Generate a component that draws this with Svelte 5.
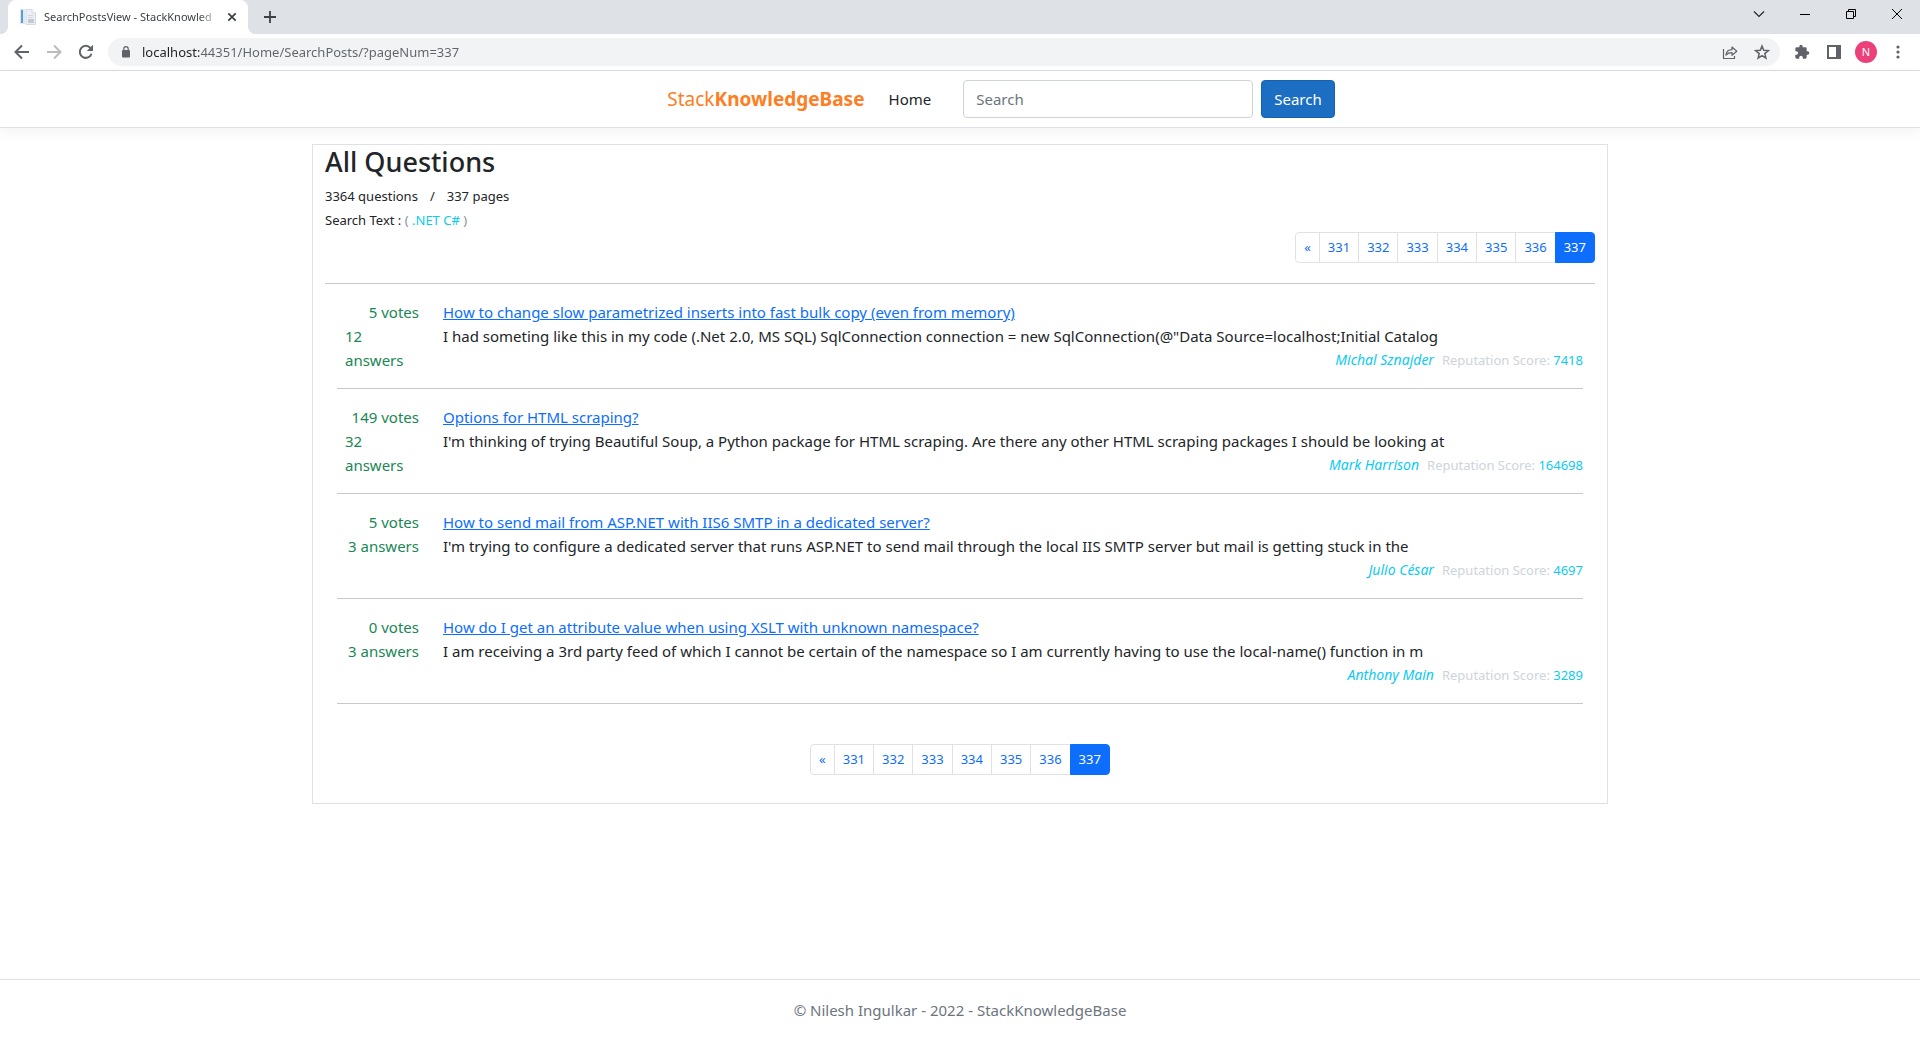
<script>
  const pages = ['«', '331', '332', '333', '334', '335', '336', '337'];
  const current = '337';
  let query = $state('');
  let address = $state('localhost:44351/Home/SearchPosts/?pageNum=337');

  const questions = [
    {
      votes: 5,
      answers: 12,
      title: 'How to change slow parametrized inserts into fast bulk copy (even from memory)',
      body: 'I had someting like this in my code (.Net 2.0, MS SQL) SqlConnection connection = new SqlConnection(@"Data Source=localhost;Initial Catalog',
      author: 'Michal Sznajder',
      score: 7418
    },
    {
      votes: 149,
      answers: 32,
      title: 'Options for HTML scraping?',
      body: "I'm thinking of trying Beautiful Soup, a Python package for HTML scraping. Are there any other HTML scraping packages I should be looking at",
      author: 'Mark Harrison',
      score: 164698
    },
    {
      votes: 5,
      answers: 3,
      title: 'How to send mail from ASP.NET with IIS6 SMTP in a dedicated server?',
      body: "I'm trying to configure a dedicated server that runs ASP.NET to send mail through the local IIS SMTP server but mail is getting stuck in the",
      author: 'Julio César',
      score: 4697
    },
    {
      votes: 0,
      answers: 3,
      title: 'How do I get an attribute value when using XSLT with unknown namespace?',
      body: 'I am receiving a 3rd party feed of which I cannot be certain of the namespace so I am currently having to use the local-name() function in m',
      author: 'Anthony Main',
      score: 3289
    }
  ];
</script>

{#snippet pager(label)}
  <nav aria-label={label}>
    <ul class="pagination">
      {#each pages as p}
        <li><a href="#page" class:active={p === current} aria-current={p === current ? 'page' : undefined}>{p}</a></li>
      {/each}
    </ul>
  </nav>
{/snippet}

<div class="window">
  <div class="tabstrip">
    <div class="tab">
      <svg class="favicon" width="16" height="16" viewBox="0 0 16 16" aria-hidden="true">
        <rect x="0" y="0" width="5" height="15" fill="#dce9f3" />
        <rect x="1" y="1" width="2" height="13" fill="#5a9fd0" />
        <path d="M6 .5h6l3.500 3.500V15.500H6z" fill="#eceff3" stroke="#d5dae0" stroke-width="1" />
        <path d="M12 .5V4h3.500" fill="#fff" stroke="#d5dae0" stroke-width="1" />
        <path d="M8 6.500h5M8 8.500h5" stroke="#d3d9df" />
        <rect x="8" y="10" width="6" height="4" fill="#c3cad3" />
      </svg>
      <span class="tab-title">SearchPostsView - StackKnowled</span>
      <button class="tab-close" aria-label="Close tab">
        <svg width="10" height="10" viewBox="0 0 10 10"><path d="M1.300 1.300l7.400 7.400M8.700 1.300L1.300 8.700" stroke="#3c4043" stroke-width="1.700" /></svg>
      </button>
    </div>
    <button class="new-tab" aria-label="New tab">
      <svg width="12" height="12" viewBox="0 0 12 12"><path d="M6 0v12M0 6h12" stroke="#3c4043" stroke-width="1.800" /></svg>
    </button>
    <div class="window-buttons">
      <button aria-label="Search tabs"><svg width="12" height="12" viewBox="0 0 12 12"><path d="M1 3.500l5 5 5-5" fill="none" stroke="#202124" stroke-width="1.100" /></svg></button>
      <button aria-label="Minimize"><svg width="10" height="10" viewBox="0 0 10 10"><path d="M0 5.500h10" stroke="#000" /></svg></button>
      <button aria-label="Restore"><svg width="10" height="10" viewBox="0 0 10 10" fill="none" stroke="#000"><path d="M.5 2.500h7v7h-7zM2.500 2.500v-2h7v7h-2" /></svg></button>
      <button aria-label="Close"><svg width="10" height="10" viewBox="0 0 10 10"><path d="M0 0l10 10M10 0L0 10" stroke="#000" /></svg></button>
    </div>
  </div>

  <div class="toolbar">
    <button class="tool" aria-label="Back"><svg width="16" height="16" viewBox="0 0 16 16" fill="none" stroke="#5f6368" stroke-width="2"><path d="M15 8H2.500M8 1.500L1.500 8 8 14.500" /></svg></button>
    <button class="tool" aria-label="Forward"><svg width="16" height="16" viewBox="0 0 16 16" fill="none" stroke="#babcbe" stroke-width="2"><path d="M1 8h12.500M8 1.500L14.500 8 8 14.500" /></svg></button>
    <button class="tool" aria-label="Reload"><svg width="16" height="16" viewBox="0 0 16 16"><path d="M13.500 9.700A6 6 0 1 1 12.400 4" fill="none" stroke="#5f6368" stroke-width="2" /><path d="M15 .8V7H8.800z" fill="#5f6368" /></svg></button>
    <div class="omnibox">
      <svg width="10" height="12" viewBox="0 0 10 12" aria-hidden="true"><rect x="1" y="4" width="8" height="7.500" rx="1" fill="#5f6368" /><path d="M2.800 5V2.800a2.200 2.200 0 0 1 4.400 0V5" fill="none" stroke="#5f6368" stroke-width="1.200" /></svg>
      <input class="address" aria-label="Address" bind:value={address} />
      <button class="tool" aria-label="Share"><svg width="16" height="16" viewBox="0 0 16 16" fill="none" stroke="#5f6368" stroke-width="1.200"><path d="M1.500 5v9.500h11V12" /><path d="M4 11c.3-3.500 2.200-5.300 6-5.400V3l4.800 4.200L10 11.300V8.700C7.300 8.700 5.500 9.400 4 11z" stroke-linejoin="round" /></svg></button>
      <button class="tool" aria-label="Bookmark"><svg width="16" height="16" viewBox="0 0 16 16" fill="none" stroke="#5f6368" stroke-width="1.500"><path d="M8 2l1.700 4.200 4.600.4-3.500 3 1.100 4.500L8 11.700l-3.900 2.400 1.100-4.500-3.500-3 4.600-.4z" /></svg></button>
    </div>
    <button class="tool" aria-label="Extensions"><svg width="16" height="16" viewBox="0 0 24 24"><path fill="#5f6368" d="M20.500 11H19V7a2 2 0 0 0-2-2h-4V3.500a2.500 2.500 0 0 0-5 0V5H4a2 2 0 0 0-2 2v3.800h1.500a2.700 2.700 0 0 1 0 5.400H2V20a2 2 0 0 0 2 2h3.800v-1.500a2.700 2.700 0 0 1 5.400 0V22H17a2 2 0 0 0 2-2v-4h1.500a2.500 2.500 0 0 0 0-5z" /></svg></button>
    <button class="tool" aria-label="Side panel"><svg width="14" height="14" viewBox="0 0 14 14"><path fill="#5f6368" fill-rule="evenodd" d="M0 0h14v14H0zM2 2v10h7V2z" /></svg></button>
    <button class="tool avatar" aria-label="Profile"><span>N</span></button>
    <button class="tool" aria-label="Menu"><svg width="4" height="14" viewBox="0 0 4 14" fill="#5f6368"><circle cx="2" cy="2" r="1.600" /><circle cx="2" cy="7" r="1.600" /><circle cx="2" cy="12" r="1.600" /></svg></button>
  </div>

  <header>
    <a class="brand" href="#home">Stack<b>KnowledgeBase</b></a>
    <a class="home" href="#home">Home</a>
    <form onsubmit={(e) => e.preventDefault()}>
      <input type="search" placeholder="Search" aria-label="Search" bind:value={query} />
      <button>Search</button>
    </form>
  </header>

  <main>
    <section class="panel">
      <h1>All Questions</h1>
      <p class="meta"><span>3364 questions</span><span>/</span><span>337 pages</span></p>
      <p class="meta-search">Search Text : <span class="paren">( <span class="term">.NET C#</span> )</span></p>
      <div class="top-pager">{@render pager('Pages, top')}</div>
      <hr />
      <div class="list">
        {#each questions as q}
          <article>
            <div class="stats">
              <div>{q.votes} votes</div>
              <div><span>{q.answers} answers</span></div>
            </div>
            <div class="content">
              <a href="#question">{q.title}</a>
              <p>{q.body}</p>
              <p class="byline"><em>{q.author}</em><span>Reputation Score: <span class="score">{q.score}</span></span></p>
            </div>
          </article>
          <hr />
        {/each}
      </div>
      <div class="bottom-pager">{@render pager('Pages, bottom')}</div>
    </section>
  </main>

  <footer>© Nilesh Ingulkar - 2022 - StackKnowledgeBase</footer>
</div>

<style>
  :global(body) {
    margin: 0;
    background: #fff;
  }
  .window {
    display: flex;
    flex-direction: column;
    min-height: 100vh;
    font-family: 'Noto Sans', 'Open Sans', sans-serif;
    font-size: 15px;
    line-height: 24px;
    color: #212529;
  }
  .window * {
    box-sizing: border-box;
  }
  button {
    font: inherit;
    border: 0;
    background: none;
    padding: 0;
  }
  h1,
  p,
  ul {
    margin: 0;
    padding: 0;
  }
  svg {
    display: block;
    flex: none;
  }

  .tabstrip {
    display: flex;
    height: 34px;
    padding-left: 8px;
    background: #dee1e6;
  }
  .tab {
    position: relative;
    display: flex;
    align-items: center;
    width: 240px;
    padding: 0 10px 0 12px;
    background: #fff;
    border-radius: 8px 8px 0 0;
  }
  .tab::before,
  .tab::after {
    content: '';
    position: absolute;
    bottom: 0;
    width: 8px;
    height: 8px;
  }
  .tab::before {
    left: -8px;
    background: radial-gradient(circle at 0 0, transparent 8px, #fff 8px);
  }
  .tab::after {
    right: -8px;
    background: radial-gradient(circle at 100% 0, transparent 8px, #fff 8px);
  }
  .tab-title {
    flex: 1;
    min-width: 0;
    margin: 0 6px 0 8px;
    overflow: hidden;
    white-space: nowrap;
    font-size: 11px;
    color: #3c4043;
    mask-image: linear-gradient(to right, #000 88%, transparent);
  }
  .tab-close {
    display: grid;
    place-items: center;
    width: 12px;
    height: 16px;
  }
  .new-tab {
    display: grid;
    place-items: center;
    width: 28px;
    margin-left: 8px;
  }
  .window-buttons {
    display: flex;
    height: 28px;
    margin-left: auto;
  }
  .window-buttons button {
    display: grid;
    place-items: center;
    width: 46px;
  }

  .toolbar {
    display: flex;
    align-items: center;
    height: 37px;
    padding: 0 6px;
    border-bottom: 1px solid #dadce0;
  }
  .tool {
    display: grid;
    place-items: center;
    flex: none;
    width: 32px;
    height: 28px;
  }
  .omnibox {
    display: flex;
    flex: 1;
    align-items: center;
    height: 28px;
    margin: 0 6px;
    padding: 0 2px 0 13px;
    border-radius: 14px;
    background: #f1f3f4;
  }
  .address {
    flex: 1;
    min-width: 0;
    margin-left: 11px;
    padding: 0;
    border: 0;
    outline: 0;
    font: inherit;
    font-size: 13px;
    color: #5f6368;
    background: linear-gradient(to right, #202124 57px, #5f6368 57px) text;
    -webkit-text-fill-color: transparent;
  }
  .avatar span {
    width: 22px;
    height: 22px;
    border-radius: 50%;
    background: #ec407a;
    color: #fff;
    font-size: 11px;
    line-height: 22px;
  }

  header {
    display: flex;
    align-items: center;
    justify-content: center;
    height: 57px;
    padding-left: 82px;
    border-bottom: 1px solid #dee2e6;
    box-shadow: 0 4px 12px rgba(0, 0, 0, 0.05);
  }
  header a {
    text-decoration: none;
  }
  .brand {
    font-size: 19px;
    color: #fd7e23;
  }
  .home {
    margin: 0 32px 0 24px;
    color: #212529;
  }
  form {
    display: flex;
    gap: 8px;
  }
  form input {
    width: 290px;
    height: 38px;
    padding: 0 12px;
    border: 1px solid #ced4da;
    border-radius: 4px;
    font: inherit;
    color: #212529;
  }
  form input::placeholder {
    color: #6c757d;
    opacity: 1;
  }
  form button {
    height: 38px;
    padding: 0 12px;
    border: 1px solid #1861ac;
    border-radius: 4px;
    background: #1b6ec2;
    color: #fff;
  }

  main {
    flex: 1;
    width: 100%;
    max-width: 1320px;
    margin: 16px auto;
    padding: 0 12px;
  }
  .panel {
    padding: 0 12px 28px;
    border: 1px solid #dee2e6;
  }
  h1 {
    margin-bottom: 5px;
    font-size: 27px;
    font-weight: 500;
    line-height: 34px;
  }
  .meta,
  .meta-search {
    font-size: 13px;
  }
  .meta {
    display: flex;
    gap: 12px;
  }
  .paren {
    color: #8a9299;
  }
  .term,
  .score {
    color: #0dcaf0;
  }
  .top-pager {
    display: flex;
    justify-content: flex-end;
    margin-bottom: 20px;
  }
  hr {
    height: 1px;
    margin: 0;
    border: 0;
    background: #c7c8c9;
  }
  .list {
    padding: 0 12px;
  }
  article {
    display: flex;
    gap: 24px;
    padding: 16px 0;
  }
  .stats {
    flex: none;
    width: 82px;
    padding-left: 8px;
    color: #198754;
  }
  .stats div {
    display: flex;
    justify-content: flex-end;
  }
  .content {
    flex: 1;
    min-width: 0;
  }
  .content a {
    color: #0d6efd;
  }
  .byline {
    display: flex;
    justify-content: flex-end;
    gap: 8px;
    font-size: 13px;
    color: #ced4da;
  }
  .byline em {
    font-size: 14px;
    color: #0dcaf0;
  }
  .bottom-pager {
    display: flex;
    justify-content: center;
    margin-top: 40px;
  }
  .pagination {
    display: flex;
    list-style: none;
    font-size: 13px;
    line-height: 21px;
  }
  .pagination a {
    display: block;
    padding: 4px 8px;
    border: 1px solid #dee2e6;
    color: #0d6efd;
    text-decoration: none;
  }
  .pagination li + li {
    margin-left: -1px;
  }
  .pagination li:first-child a {
    border-radius: 4px 0 0 4px;
  }
  .pagination li:last-child a {
    border-radius: 0 4px 4px 0;
  }
  .pagination .active {
    border-color: #0d6efd;
    background: #0d6efd;
    color: #fff;
  }

  footer {
    border-top: 1px solid #dee2e6;
    text-align: center;
    line-height: 60px;
    color: #6c757d;
  }
</style>
